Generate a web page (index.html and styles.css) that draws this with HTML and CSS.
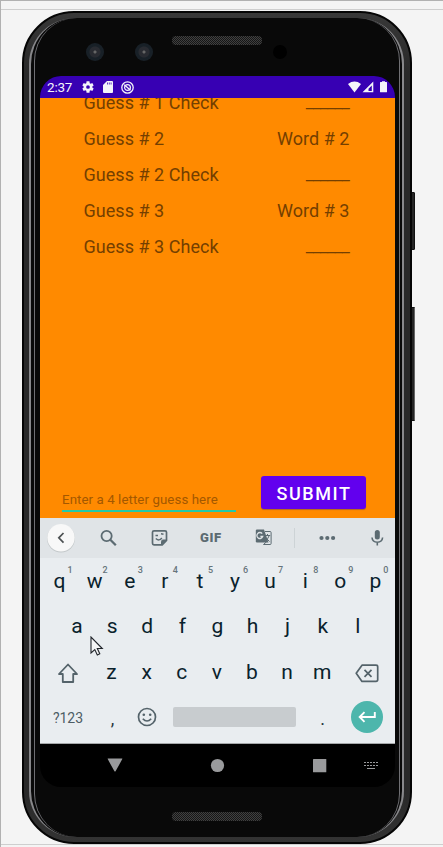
FILE: index.html
```html
<!DOCTYPE html>
<html lang="en">
<head>
<meta charset="utf-8">
<title>Word game</title>
<link rel="stylesheet" href="styles.css">
</head>
<body>
<div class="panel">
<div class="phone">
  <i class="button power"></i><i class="button volume"></i>
  <div class="rim"><div class="groove"><div class="glass">
    <div class="top-bezel">
      <i class="lens lens-a"></i><i class="lens lens-b"></i><i class="speaker"></i><i class="sensor"></i>
    </div>
    <div class="screen">
      <header class="status">
        <span class="clock">2:37</span>
        <svg class="gear" width="14" height="14" viewBox="0 0 24 24"><path fill="#f4f4fa" d="M19.4 13a7.500 7.500 0 0 0 0-2l2.300-1.700-2.300-4-2.700 1.200a7.500 7.500 0 0 0-1.800-1L14.500 2h-5l-.4 3.500a7.500 7.500 0 0 0-1.800 1L4.600 5.300l-2.300 4L4.600 11a7.500 7.500 0 0 0 0 2l-2.300 1.700 2.300 4 2.700-1.200a7.500 7.500 0 0 0 1.800 1l.4 3.500h5l.4-3.500a7.500 7.500 0 0 0 1.800-1l2.700 1.200 2.300-4zM12 15.200a3.200 3.200 0 1 1 0-6.400 3.200 3.200 0 0 1 0 6.400z"/></svg>
        <svg class="sd" width="10" height="12" viewBox="0 0 10 12"><path fill="#f4f4fa" d="M4 0h5q1 0 1 1v10q0 1-1 1H1q-1 0-1-1V4z"/><path stroke="#3700b3" stroke-width=".8" d="M4.500 1.500v2M6.300 1.500v2M8.100 1.500v2"/></svg>
        <svg class="debug" width="13" height="13" viewBox="0 0 13 13" fill="none" stroke="#f4f4fa"><circle cx="6.500" cy="6.500" r="5.700" stroke-width="1.300"/><circle cx="6.500" cy="6.500" r="2.900" stroke-width="1.200"/><path stroke-width="1.300" d="M3.300 3.800l6.200 5.400"/></svg>
        <span class="spacer"></span>
        <svg width="41" height="14" viewBox="0 0 41 14" fill="#f4f4fa"><path d="M0 4Q6.500-.8 13 4L6.500 12.500z"/><path fill-rule="evenodd" d="M14.500 12.300L25.300 1.500v10.800zM20.500 11h3.300V5.500L20.500 8.700z"/><path d="M34 1.200h3V2h1.500q.5 0 .5.500v9.200q0 .6-.6.600h-5.800q-.6 0-.6-.6V2.500q0-.5.500-.5H34z"/></svg>
      </header>
      <main class="game">
        <dl class="guesses">
          <dt>Guess # 1 Check</dt><dd class="blank">______</dd>
          <dt>Guess # 2</dt><dd>Word # 2</dd>
          <dt>Guess # 2 Check</dt><dd class="blank">______</dd>
          <dt>Guess # 3</dt><dd>Word # 3</dd>
          <dt>Guess # 3 Check</dt><dd class="blank">______</dd>
        </dl>
        <div class="entry"><div class="field">Enter a 4 letter guess here</div><div class="submit">SUBMIT</div></div>
      </main>
      <div class="tools">
        <svg width="355" height="40" viewBox="0 0 355 40" fill="none" stroke="#5c6b72">
          <circle cx="21" cy="20.500" r="14" fill="#c3c8ca" stroke="none"/><circle cx="21" cy="19.700" r="13.700" fill="#f8f8f8" stroke="none"/>
          <path stroke="#4c5052" stroke-width="1.700" d="M23.500 15l-4.700 4.800 4.700 4.800"/>
          <circle cx="66.600" cy="18" r="5.100" stroke-width="1.800"/><path stroke-width="2.300" d="M70.300 21.700l5.500 5.600"/>
          <path stroke-width="1.700" d="M114 12.800h11q1.500 0 1.500 1.500v8.200l-4.300 4.300H114q-1.500 0-1.500-1.500v-11q0-1.500 1.500-1.500z"/><path fill="#5c6b72" d="M121.500 27v-3.500q0-1.500 1.500-1.500h3.500z"/><path stroke-width="1.500" d="M115.500 17.500h2.500M121 15.800l2.500.4M115.800 20.500q3.500 3 6-.5"/>
          <path fill="#5c6b72" stroke="none" d="M217 11.500h7l4.500 13H217q-1.200 0-1.200-1.200V12.700q0-1.200 1.200-1.200z"/><path stroke-width="1" d="M225 13.500h5q1.100 0 1.100 1v11q0 1-1 1h-6.600l3.300-3M224.700 17.500h5.500M227.500 16v1.500M229 18q-.8 3-4 5M225.500 19.500l4 4"/><path stroke="#e0e4e7" stroke-width="1.300" d="M222.200 15.600a3 3 0 1 0 .5 2.900h-2.300"/>
          <path stroke="#cdd3d6" d="M254.500 10v20"/>
          <g fill="#5c6b72" stroke="none"><circle cx="281.500" cy="20" r="2.100"/><circle cx="287.300" cy="20" r="2.100"/><circle cx="293.100" cy="20" r="2.100"/><rect x="334.800" y="12" width="5" height="9.600" rx="2.500"/></g>
          <path stroke-width="1.600" d="M332 19.500q.4 4.700 5.300 4.700t5.300-4.700M337.300 24v3.500"/>
        </svg>
        <b class="gif">GIF</b>
      </div>
      <div class="keyboard">
        <div class="row numbers">
          <span>q<sup>1</sup></span><span>w<sup>2</sup></span><span>e<sup>3</sup></span><span>r<sup>4</sup></span><span>t<sup>5</sup></span><span>y<sup>6</sup></span><span>u<sup>7</sup></span><span>i<sup>8</sup></span><span>o<sup>9</sup></span><span>p<sup>0</sup></span>
        </div>
        <div class="row home"><span>a</span><span>s</span><span>d</span><span>f</span><span>g</span><span>h</span><span>j</span><span>k</span><span>l</span></div>
        <div class="row lower">
          <span class="wide"><svg width="22" height="21" viewBox="0 0 22 21" fill="none" stroke="#54636a" stroke-width="1.800"><path stroke-linejoin="round" d="M11 1.500L20 11h-3.800v8H5.800v-8H2z"/></svg></span>
          <span>z</span><span>x</span><span>c</span><span>v</span><span>b</span><span>n</span><span>m</span>
          <span class="wide"><svg width="24" height="19" viewBox="0 0 24 19" fill="none" stroke="#54636a" stroke-width="1.700"><path stroke-linejoin="round" d="M7 1.200h14q1.700 0 1.700 1.600v13q0 1.600-1.700 1.600H7L1.200 9.300z"/><path d="M9.500 5.800l7 7M16.500 5.800l-7 7"/></svg></span>
        </div>
        <div class="row bottom">
          <span class="mode">?123</span><span class="punct">,</span>
          <span class="smile"><svg width="20" height="20" viewBox="0 0 20 20" fill="none" stroke="#54636a" stroke-width="1.700"><circle cx="10" cy="10" r="8.500"/><circle cx="6.800" cy="7.800" r="1.300" fill="#54636a" stroke="none"/><circle cx="13.200" cy="7.800" r="1.300" fill="#54636a" stroke="none"/><path d="M5.800 11.700q4.200 4.600 8.400 0"/></svg></span>
          <i class="space"></i><span class="punct dot">.</span>
          <span class="enter"><svg width="18" height="12" viewBox="0 0 18 12" fill="none" stroke="#fff" stroke-width="1.900"><path d="M16.800 1v5H2M6.500 1.200L1.700 6l4.800 4.800"/></svg></span>
        </div>
      </div>
      <nav class="nav">
        <svg width="355" height="43" viewBox="0 0 355 43" fill="#999a9c"><path d="M68 14.500h14q.6 0 .3.600l-6.600 12q-.7 1-1.400 0l-6.600-12q-.3-.6.300-.6z"/><circle cx="177.500" cy="21.500" r="6.600"/><rect x="273" y="15" width="13.300" height="13.300" rx=".5"/><path fill="none" stroke="#999a9c" stroke-dasharray="2 1" d="M324 18.500h14M324 21.500h14"/><path fill="none" stroke="#999a9c" d="M327 24.500h8"/></svg>
      </nav>
    </div>
    <div class="bottom-bezel"><i class="speaker"></i></div>
  </div></div></div>
  <svg class="cursor" width="14" height="21" viewBox="0 0 14 21"><path d="M1 1v16l3.800-3.400 2.500 5.400 2.500-1.200-2.500-5.300h5z" fill="#f4f5f6" stroke="#20242a" stroke-width="1.100"/></svg>
</div>
</div>
</body>
</html>
```
FILE: styles.css
```css
* { box-sizing: border-box; }
body { margin: 0; background: #f4f4f4; font-family: Roboto, sans-serif; }
svg { display: block; flex: none; }
.panel { height: 847px; overflow: hidden; padding: 10px 0 0 21px; border-top: 1px solid #b1b1b1; border-left: 1px solid #b1b1b1; background: linear-gradient(#f4f4f4 8px, #cecece 8px, #cecece 9px, #f4f4f4 9px, #f4f4f4 843px, #cecece 843px, #cecece 844px, #f4f4f4 844px); }
.phone { position: relative; width: 390px; height: 833px; }
.button { position: absolute; left: 387px; width: 6px; background: #252525; border: 1px solid #111; border-radius: 1px; }
.power { top: 181px; height: 58px; }
.volume { top: 296px; height: 114px; border-right-color: #666; }
.rim { position: relative; height: 833px; padding: 5px 6px 5px 5px; border: 2px solid #050505; border-radius: 52px; background: linear-gradient(#383838, #292929 60px, #292929 780px, #333); }
.groove { height: 819px; padding: 0 2px 0 3px; border: solid #88888b; border-width: 0 2px; border-radius: 46px; background: #090909; }
.glass { height: 819px; padding: 1px 3px 0 5px; border: solid #707074; border-width: 0 1px; border-radius: 43px; background: #090909; }
.top-bezel { position: relative; height: 57px; }
.lens { position: absolute; top: 24px; width: 18px; height: 18px; border-radius: 50%; background: radial-gradient(circle, #666 0 1px, #292b31 2px 5px, #182027 6px); }
.lens-a { left: 46px; }
.lens-b { left: 95px; }
.speaker { display: block; width: 90px; height: 9px; border-radius: 4px; background: repeating-conic-gradient(#404040 0 25%, #161616 0 50%) 0 0 / 2px 2px; }
.top-bezel .speaker { position: absolute; left: 132px; top: 17px; }
.sensor { position: absolute; left: 233px; top: 26px; width: 14px; height: 14px; border-radius: 50%; background: #000; }
.screen { width: 355px; height: 711px; border-radius: 21px; overflow: hidden; background: #000; }
.status { position: relative; z-index: 1; height: 22px; display: flex; align-items: center; padding: 0 6px 0 7px; background: #3700b3; color: #f4f4fa; }
.clock { width: 34px; font-size: 13.500px; line-height: 22px; letter-spacing: -.2px; }
.gear { margin-right: 8px; }
.sd { margin-right: 8px; }
.spacer { flex: 1; }
.game { height: 420px; display: flex; flex-direction: column; justify-content: space-between; background: #ff8a00; }
.guesses { display: grid; grid-template-columns: 1fr auto; grid-auto-rows: 36px; margin: -13px 45.500px 0 43.500px; color: #743f00; font-size: 18px; line-height: 36px; letter-spacing: .03px; }
.guesses dt, .guesses dd { margin: 0; text-align: right; }
.guesses dt { text-align: left; }
.guesses .blank { margin-right: .5px; letter-spacing: -.9px; line-height: 33px; }
.entry { display: flex; padding-left: 22px; height: 42px; }
.field { width: 174px; height: 36px; padding-top: 15px; border-bottom: 2px solid #25c9a8; color: #a35800; font-size: 13.300px; line-height: 17px; letter-spacing: .07px; white-space: nowrap; }
.submit { width: 105px; height: 33px; margin-left: 25px; border-radius: 3px; background: #6200ee; color: #fff; font-size: 18px; font-weight: 500; line-height: 35px; text-align: center; letter-spacing: 1.600px; text-indent: 1px; box-shadow: 0 1px 1px #b36524; }
.tools { position: relative; height: 40px; background: #e0e4e7; }
.gif { position: absolute; left: 160px; top: 11px; color: #5c6b72; font-size: 13px; line-height: 18px; font-weight: 900; letter-spacing: .6px; }
.keyboard { height: 186px; background: #e9edf0; color: #0a222c; font-size: 21px; line-height: 45px; border-bottom: 1px solid #a5a8aa; }
.row { display: flex; height: 46px; }
.row > span { position: relative; width: 35.100px; text-align: center; }
.numbers { padding-left: 2px; line-height: 46px; }
.numbers sup { position: absolute; left: 25.500px; top: 7px; font-size: 9px; line-height: 10px; font-weight: 500; color: #66747b; }
.home { padding-left: 19.500px; }
.row > .wide { width: 54px; display: flex; align-items: center; justify-content: center; }
.row > .wide:first-child { padding-left: 2px; }
.row > .mode { width: 56px; color: #4d5d65; font-size: 14px; line-height: 44px; }
.row > .punct { width: 33px; font-size: 18px; color: #26343a; }
.row > .smile { width: 36px; padding: 11px 8px; }
.space { width: 123px; height: 20px; margin: 11px 10px 0 8px; border-radius: 2px; background: #c8cccf; }
.row > .enter { width: 32px; height: 32px; margin: 5px 0 0 11.500px; border-radius: 50%; display: flex; align-items: center; justify-content: center; background: #4db6ac; }
.nav { height: 43px; }
.bottom-bezel { padding: 25px 0 0 132px; }
.cursor { position: absolute; left: 68px; top: 625px; }
```
